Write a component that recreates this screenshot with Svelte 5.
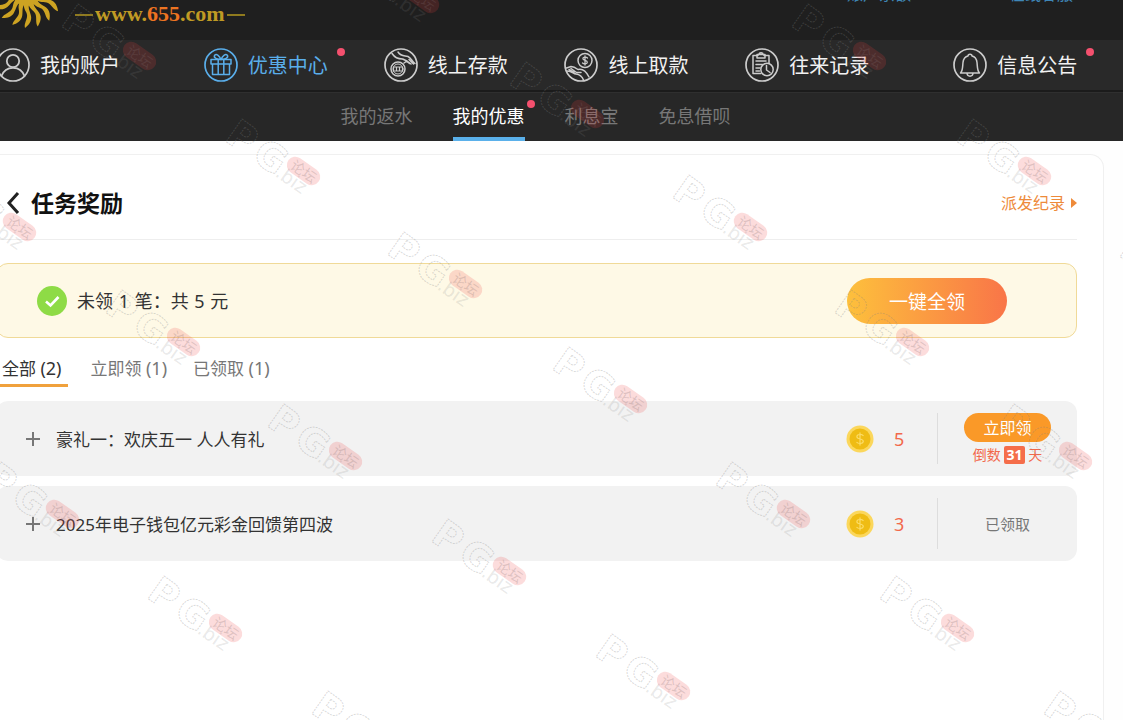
<script>
  const navItems = [
    { id: 'account', label: '我的账户', dot: false },
    { id: 'gift', label: '优惠中心', dot: true, active: true },
    { id: 'deposit', label: '线上存款', dot: false },
    { id: 'withdraw', label: '线上取款', dot: false },
    { id: 'records', label: '往来记录', dot: false },
    { id: 'news', label: '信息公告', dot: true }
  ];
  const subItems = [
    { label: '我的返水' },
    { label: '我的优惠', active: true, dot: true },
    { label: '利息宝' },
    { label: '免息借呗' }
  ];
  const rewards = [
    { title: '豪礼一：欢庆五一 人人有礼', amount: 5, days: 31, claimed: false },
    { title: '2025年电子钱包亿元彩金回馈第四波', amount: 3, claimed: true }
  ];
  const filters = [
    { id: 'all', label: '全部', count: rewards.length },
    { id: 'open', label: '立即领', count: rewards.filter((r) => !r.claimed).length },
    { id: 'done', label: '已领取', count: rewards.filter((r) => r.claimed).length }
  ];
  let filter = $state('all');
  const shown = $derived(
    rewards.filter((r) => filter === 'all' || (filter === 'done') === r.claimed)
  );

  const rays = Array.from({ length: 18 }, (_, i) => i * 20);
  const marks = [
    [62, 5], [226, 120], [388, 233], [553, 348], [716, 463], [880, 577], [1044, 692],
    [345, -52], [510, 63], [673, 176], [835, 291], [998, 405],
    [792, 5], [957, 120], [1120, 235],
    [-58, 176], [106, 291], [268, 405], [432, 520], [596, 635],
    [-15, 463], [148, 577], [312, 692]
  ];
</script>

<div class="page">
  <header class="top">
    <a class="logo" href="#home">
      <svg class="sun" width="64" height="40" viewBox="0 0 64 40" aria-hidden="true">
        <g transform="translate(27 -9)" fill="#cda322">
          <circle r="15" />
          {#each rays as a}
            <path transform="rotate({a})" d="M-3 13C-4 19 1 21 0 26C-1 31-3 33-2 37C2 34 5 30 4 25C3 20 1 18 2 13Z" />
          {/each}
        </g>
      </svg>
      <span class="dash"></span>
      <span class="domain">www.<b>655</b>.com</span>
      <span class="dash"></span>
    </a>
    <div class="top-links">
      <a href="#balance">账户余额</a>
      <a href="#service">在线客服</a>
    </div>
  </header>

  <nav class="main-nav" aria-label="主导航">
    {#each navItems as item}
      <a href="#{item.id}" class="nav-item" class:active={item.active}>
        <svg width="34" height="34" viewBox="0 0 34 34" fill="none" stroke="currentColor" stroke-width="1.5" stroke-linecap="round" stroke-linejoin="round" aria-hidden="true">
          <circle cx="17" cy="17" r="16" stroke-width="1.7" />
          {#if item.id === 'account'}
            <circle cx="17" cy="13" r="6.2" stroke-width="1.8" />
            <path d="M5.5 28C7.500 22.500 11.500 19.800 17 19.800S26.500 22.500 28.500 28" stroke-width="1.8" />
          {:else if item.id === 'gift'}
            <path d="M7 11.500H27V16H7ZM8.500 16V26.500H25.500V16M14.200 11.500V26.500M19.800 11.500V26.500" />
            <path d="M17 11.500C13 11.500 9.500 10 10.500 7.500C12 5 15.500 7.500 17 11.500C18.500 7.500 22 5 23.500 7.500C24.500 10 21 11.500 17 11.500Z" />
          {:else if item.id === 'deposit'}
            <circle cx="14" cy="21" r="7" />
            <circle cx="14" cy="21" r="5" stroke-width="1" />
            <path d="M9.500 19H18.500V23H9.500ZM12.500 19V23M15.500 19V23" stroke-width="1.2" />
            <path d="M8 5.500C11 10 14 11 18.500 11L23 13L20 15M14 4C17 8.500 20 7.500 24 8.500C27 10 28 13 31 15.500M23 13L27 16M25 11.500L29.500 16M20 11.500L25.500 15.500" />
          {:else if item.id === 'withdraw'}
            <circle cx="21" cy="12.500" r="7" />
            <path d="M23.500 10C22 8.500 18.800 8.900 18.900 10.800C19 12.800 23.300 12 23.300 14.300C23.200 16.200 20 16.400 18.500 15M21 8V17" stroke-width="1.3" />
            <path d="M2.500 20L7 18.500C10 18.500 12 20 14 21.500C18 20.500 22 23 25 29M3 23C8 23 9 25.500 12 26C16 26.500 18 28 19.500 32M7 20.500L12.500 24.500H17M5 21.500L10 24.500" />
          {:else if item.id === 'records'}
            <path d="M13 7.500H8V25.500H16M19 7.500H24V15M12 6.500H20V10H12ZM14 6.500C14 4 18 4 18 6.500M11 13H21M11 16.500H17.500M11 20H15M11 23H14.500" />
            <circle cx="22" cy="21.500" r="6.200" />
            <path d="M21.500 17.500V22L25 24.500" />
          {:else}
            <path d="M7.500 25H26.500C24 22.500 24.500 18.500 24 14.500C23.500 10.500 21.500 8.500 19 8C19 5.500 15 5.500 15 8C12.500 8.500 10.500 10.500 10 14.500C9.500 18.500 10 22.500 7.500 25ZM14 25.500C14.500 29 19.500 29 20 25.500" />
          {/if}
        </svg>
        <span class="nav-label">{item.label}{#if item.dot}<i class="dot"></i>{/if}</span>
      </a>
    {/each}
  </nav>

  <nav class="sub-nav" aria-label="优惠中心">
    {#each subItems as item}
      <a href="#{item.label}" class:active={item.active}>{item.label}{#if item.dot}<i class="dot"></i>{/if}</a>
    {/each}
  </nav>

  <main>
    <div class="panel">
      <div class="panel-head">
        <button class="back" aria-label="返回">
          <svg width="16" height="24" viewBox="0 0 16 24" fill="none" stroke="#222" stroke-width="3" aria-hidden="true"><path d="M13 2L4 12L13 22" /></svg>
        </button>
        <h1>任务奖励</h1>
        <a class="history" href="#history">派发纪录
          <svg width="6" height="10" viewBox="0 0 6 10" fill="currentColor" aria-hidden="true"><path d="M0 0L6 5L0 10Z" /></svg>
        </a>
      </div>

      <section class="notice">
        <svg width="30" height="30" viewBox="0 0 30 30" aria-hidden="true">
          <circle cx="15" cy="15" r="15" fill="#8edb46" />
          <path d="M9 15.500L13.500 19.500L21.500 11" fill="none" stroke="#fff" stroke-width="2.600" />
        </svg>
        <p>未领 <span>1</span> 笔：共 <span>5</span> 元</p>
        <button class="claim-all">一键全领</button>
      </section>

      <div class="filters">
        {#each filters as f}
          <button class:active={filter === f.id} onclick={() => (filter = f.id)}>{f.label} <span>({f.count})</span></button>
        {/each}
      </div>

      <ul class="rewards">
        {#each shown as r}
          <li>
            <button class="expand" aria-label="展开">
              <svg width="16" height="16" viewBox="0 0 16 16" stroke="#777" stroke-width="2" aria-hidden="true"><path d="M1 8H15M8 1V15" /></svg>
            </button>
            <span class="title">{r.title}</span>
            <svg class="coin" width="28" height="28" viewBox="0 0 28 28" aria-hidden="true">
              <circle cx="14" cy="14" r="13.500" fill="#fbd75c" />
              <circle cx="14" cy="14" r="10.500" fill="#efbc14" />
              <path d="M17.500 10.800C15.800 8.800 10.800 9 10.900 11.700C11 14.800 17.300 13.200 17.300 16.300C17.200 19 12.200 19.200 10.500 17M14 7.500V20.500" fill="none" stroke="#fbdc67" stroke-width="1.200" />
            </svg>
            <span class="amount">{r.amount}</span>
            <div class="action">
              {#if r.claimed}
                <span class="claimed">已领取</span>
              {:else}
                <button class="claim">立即领</button>
                <span class="countdown">倒数 <b>{r.days}</b> 天</span>
              {/if}
            </div>
          </li>
        {/each}
      </ul>
    </div>
  </main>

  <svg class="watermark" aria-hidden="true">
    {#each marks as [x, y]}
      <g transform="translate({x - 1} {y + 21}) rotate(35)">
        <g class="mark-letters">
          <text x="-2" y="0">P</text>
          <text x="31" y="0">G</text>
        </g>
        <text class="mark-biz" x="60" y="0">.biz</text>
        <rect x="63" y="-29" width="37" height="17" rx="8.5" />
        <text class="mark-forum" x="68" y="-15">论坛</text>
      </g>
    {/each}
  </svg>
</div>

<style>
  :global(body) {
    margin: 0;
    background: #fefefe;
  }
  .page {
    position: relative;
    display: flex;
    flex-direction: column;
    min-height: 100vh;
    overflow: hidden;
    font-family: 'Noto Sans', 'Noto Sans CJK SC', sans-serif;
    color: #333;
  }
  .page * {
    box-sizing: border-box;
  }
  a {
    color: inherit;
    text-decoration: none;
  }
  button {
    padding: 0;
    border: 0;
    background: none;
    font: inherit;
    color: inherit;
    cursor: pointer;
  }
  .top {
    display: flex;
    justify-content: space-between;
    height: 40px;
    overflow: hidden;
    background: #1f1f1f;
  }
  .logo {
    display: flex;
    align-items: flex-start;
    gap: 2px;
    color: #bf9a24;
  }
  .sun {
    margin-right: 9px;
  }
  .dash {
    width: 18px;
    height: 2px;
    margin-top: 14px;
    background: #8f7a1e;
  }
  .domain {
    font: bold 22px/28px 'Liberation Serif', serif;
  }
  .domain b {
    color: #ee7421;
  }
  .top-links {
    display: flex;
    gap: 98px;
    padding-right: 50px;
    margin-top: -14px;
    font-size: 16px;
    line-height: 16px;
    color: #3f87b8;
  }
  .main-nav {
    display: grid;
    grid-template-columns: 208fr 180fr 181fr 181fr 208fr 170fr;
    height: 52px;
    margin-left: -4px;
    background: #292929;
    border-bottom: 2px solid #1b1b1b;
    color: #f2f2f2;
  }
  .nav-item {
    display: flex;
    align-items: center;
    gap: 10px;
    font-size: 20px;
    line-height: 28px;
    white-space: nowrap;
  }
  .nav-item svg {
    flex: none;
    color: #ccc;
  }
  .nav-item.active,
  .nav-item.active svg {
    color: #5aaeea;
  }
  .nav-label {
    position: relative;
    padding-top: 2px;
  }
  .dot {
    position: absolute;
    top: -2px;
    right: -17px;
    width: 8px;
    height: 8px;
    border-radius: 50%;
    background: #f4506e;
  }
  .sub-nav {
    display: flex;
    justify-content: center;
    gap: 40px;
    height: 49px;
    padding-right: 52px;
    border-top: 1px solid #2f2f2f;
    background: #272727;
    font-size: 18px;
    line-height: 46px;
    color: #777;
  }
  .sub-nav a {
    position: relative;
  }
  .sub-nav .active {
    border-bottom: 4px solid #5ab0ea;
    color: #fff;
  }
  .sub-nav .dot {
    top: 7px;
    right: -10px;
  }
  main {
    display: flex;
    flex: 1;
    padding: 13px 19px 0 0;
  }
  .panel {
    flex: 1;
    margin-left: -20px;
    padding: 0 26px 0 15px;
    border: 1px solid #f0f0f0;
    border-bottom: 0;
    border-radius: 14px 14px 0 0;
    background: #fff;
  }
  .panel-head {
    display: flex;
    align-items: center;
    height: 85px;
    padding-top: 12px;
    border-bottom: 1px solid #eee;
  }
  .back {
    display: flex;
    margin-left: 9px;
  }
  h1 {
    flex: 1;
    margin: 0 0 0 10px;
    font-size: 23px;
    line-height: 32px;
    font-weight: 700;
    color: #111;
  }
  .history {
    display: flex;
    align-items: center;
    gap: 6px;
    font-size: 16px;
    line-height: 24px;
    color: #ee8a3a;
  }
  .notice {
    display: flex;
    align-items: center;
    height: 75px;
    margin-top: 23px;
    padding: 0 69px 0 40px;
    border: 1px solid #f0da98;
    border-radius: 12px;
    background: #fef9e6;
    font-size: 18px;
  }
  .notice p {
    flex: 1;
    margin: 0 0 0 10px;
    line-height: 28px;
  }
  .notice span {
    margin: 0 1px;
  }
  .claim-all {
    width: 160px;
    height: 46px;
    border-radius: 23px;
    background: linear-gradient(90deg, #fdc03c, #f97548);
    font-size: 19px;
    color: #fff;
  }
  .filters {
    display: flex;
    gap: 20px;
    height: 49px;
    padding-left: 1px;
    font-size: 17px;
    color: #777;
  }
  .filters button {
    height: 49px;
    padding: 12px 3px 0;
    border-bottom: 3px solid transparent;
    white-space: nowrap;
  }
  .filters span {
    font-size: 18px;
  }
  .filters .active {
    padding: 12px 6px 0 5px;
    border-color: #f0a13c;
    color: #333;
  }
  .rewards {
    display: flex;
    flex-direction: column;
    gap: 10px;
    margin: 14px 0 0;
    padding: 0;
    list-style: none;
  }
  .rewards li {
    display: flex;
    align-items: center;
    height: 75px;
    padding-left: 29px;
    border-radius: 12px;
    background: #f2f2f2;
    font-size: 17px;
  }
  .expand {
    display: flex;
  }
  .title {
    flex: 1;
    margin-left: 15px;
  }
  .amount {
    width: 63px;
    padding-left: 20px;
    font-size: 18px;
    color: #f2694c;
  }
  .action {
    display: flex;
    flex-direction: column;
    align-items: center;
    justify-content: center;
    gap: 4px;
    width: 140px;
    height: 51px;
    border-left: 1px solid #ddd;
  }
  .claim {
    height: 29px;
    padding: 0 19px;
    border-radius: 15px;
    background: #fa9928;
    font-size: 16px;
    line-height: 28px;
    color: #fff;
  }
  .countdown {
    font-size: 14px;
    line-height: 18px;
    color: #f2694c;
  }
  .countdown b {
    display: inline-block;
    padding: 0 2px;
    border-radius: 2px;
    background: #f56d4a;
    color: #fff;
  }
  .claimed {
    font-size: 15px;
    line-height: 20px;
    color: #777;
  }
  .watermark {
    position: absolute;
    inset: 0;
    width: 100%;
    height: 100%;
    pointer-events: none;
    fill: none;
    stroke: rgba(130, 130, 130, 0.3);
    stroke-width: 1;
  }
  .mark-letters {
    font: bold 38px 'DejaVu Sans', sans-serif;
    stroke-dasharray: 2 1;
  }
  .mark-biz {
    font: 19px 'DejaVu Sans', sans-serif;
    fill: rgba(130, 130, 130, 0.18);
    stroke: none;
  }
  .watermark rect {
    fill: rgba(240, 60, 60, 0.18);
    stroke: none;
  }
  .mark-forum {
    font: 14px 'Noto Sans CJK SC', sans-serif;
    fill: rgba(130, 110, 110, 0.25);
    stroke: none;
  }
</style>
